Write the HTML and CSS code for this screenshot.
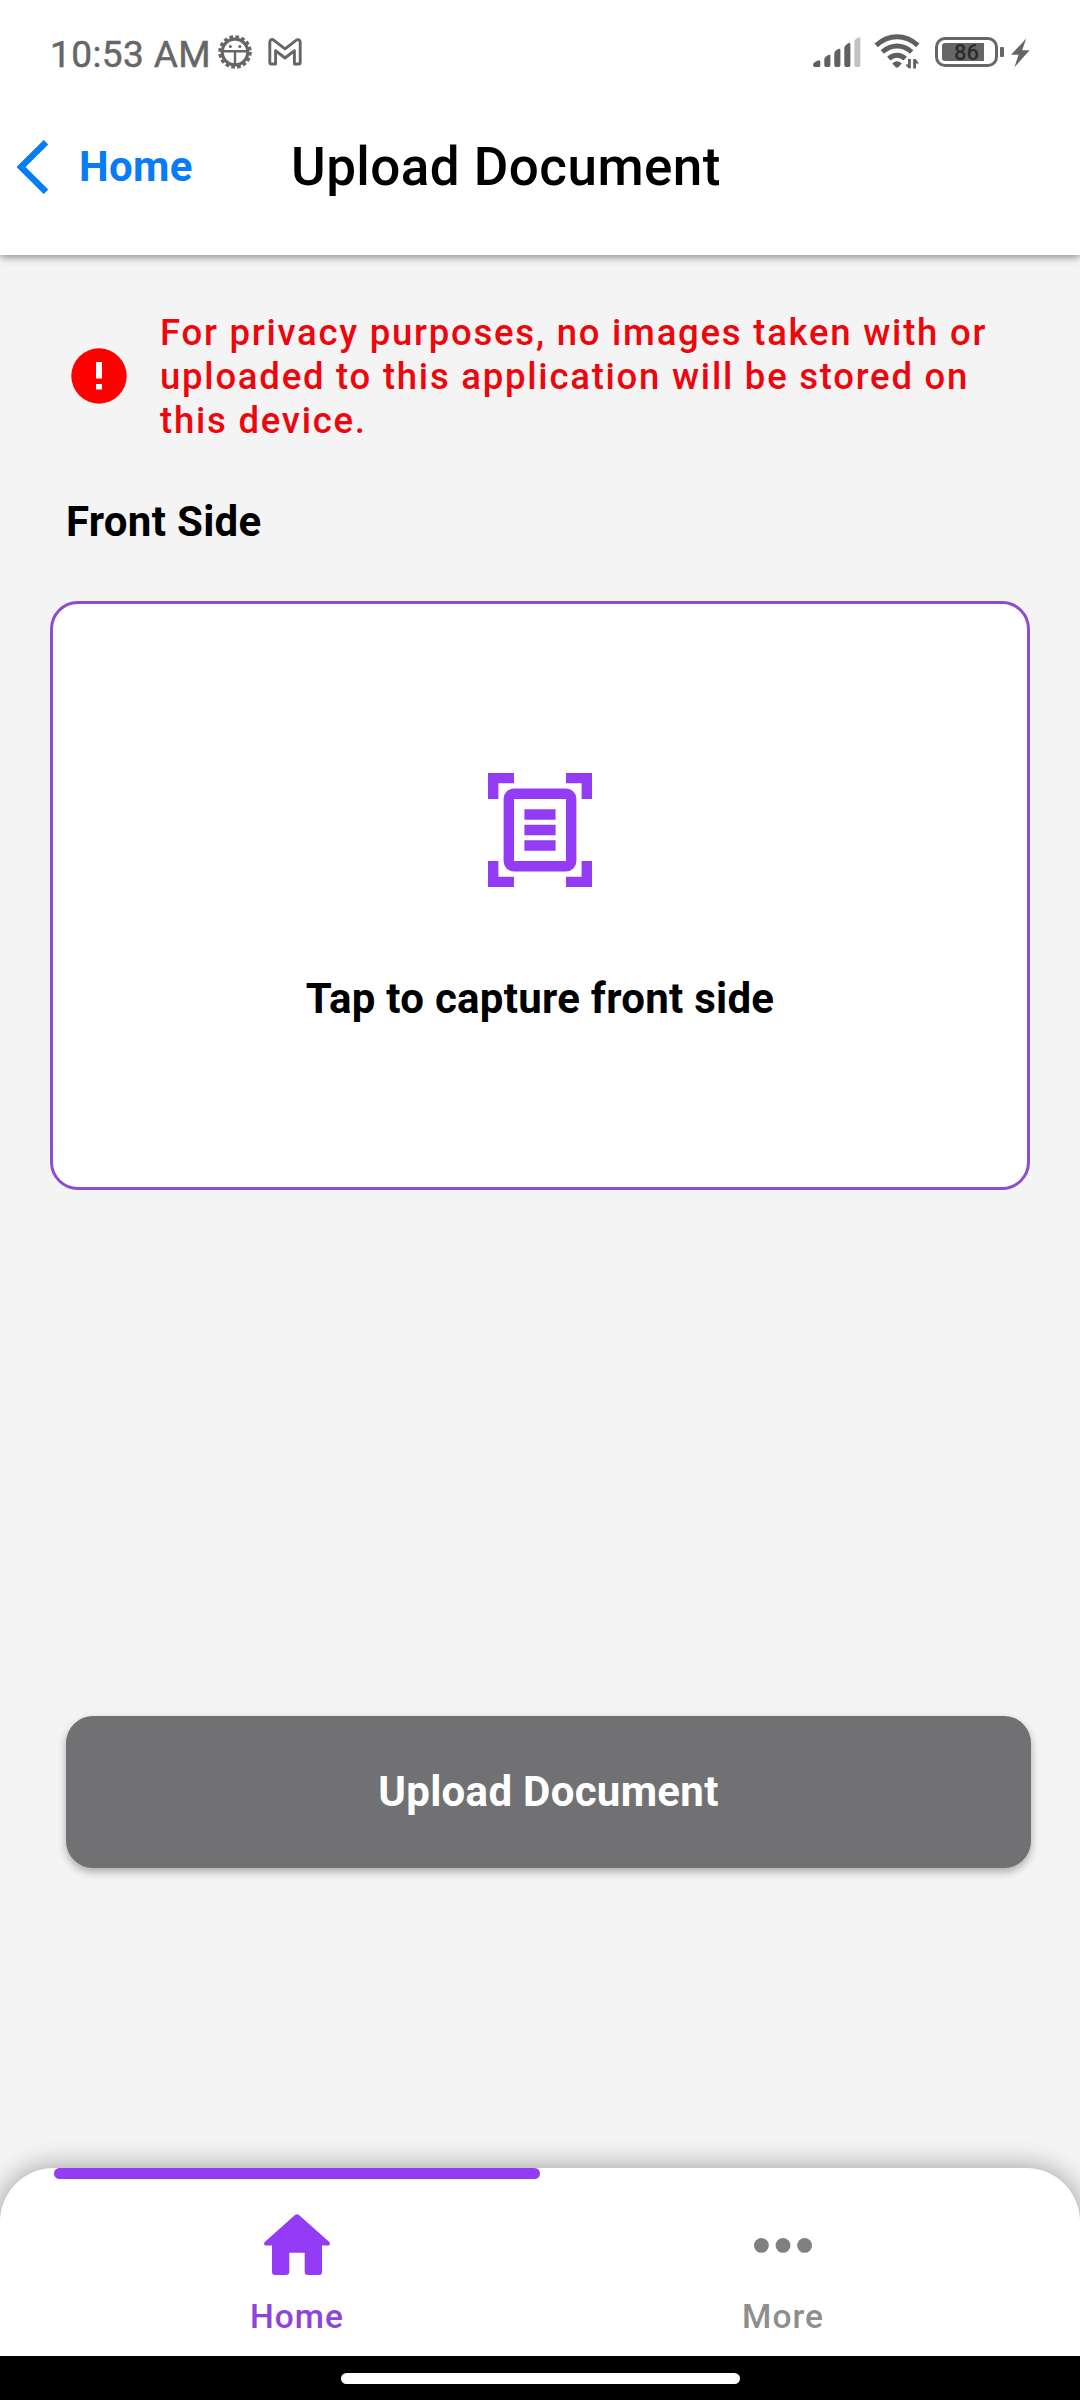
FILE: index.html
```html
<!DOCTYPE html>
<html lang="en">
<head>
<meta charset="utf-8">
<title>Upload Document</title>
<link rel="stylesheet" href="styles.css">
</head>
<body>
<div class="screen">
  <header class="header">
    <div class="status">
      <span class="time">10:53 AM</span>
      <svg class="status-sun" width="36" height="36" viewBox="0 0 36 36">
        <circle cx="18" cy="18" r="15" fill="none" stroke="#666" stroke-width="3.6" stroke-dasharray="3.6 2.29"/>
        <circle cx="18" cy="18" r="12.8" fill="none" stroke="#666" stroke-width="3.2"/>
        <path d="M6 17.2H30M18 17.2V30" fill="none" stroke="#666" stroke-width="2.4"/>
        <circle cx="13.4" cy="12.4" r="1.5" fill="#666"/><circle cx="22.8" cy="12.4" r="1.5" fill="#666"/>
      </svg>
      <svg class="status-mail" width="34" height="28" viewBox="0 0 34 28">
        <path d="M3.2 1.7Q4.7 1.2 6 2.3L17 10.8L28 2.3Q29.3 1.2 30.9 1.8Q32.2 2.5 32.2 4.3V24.4Q32.2 26 30.7 26H26.4V12.6L17 20L7.6 12.6V26H3.3Q1.8 26 1.8 24.4V4.3Q1.8 2.2 3.2 1.7Z" fill="none" stroke="#666" stroke-width="2.9" stroke-linejoin="round"/>
      </svg>
      <span class="spacer"></span>
      <svg class="status-signal" width="48" height="32" viewBox="0 0 48 32">
        <g fill="#606060">
          <path d="M0 28Q0 26 2 25L5 23.6Q7.3 22.6 7.3 25V28.5Q7.3 30 5.8 30H2Q0 30 0 28Z"/>
          <path d="M11.3 22.5Q11.3 20.6 13 19.6L15.4 18Q17.4 17 17.4 19V28.3Q17.4 30 15.7 30H13Q11.3 30 11.3 28.3Z"/>
          <path d="M21.3 16.5Q21.3 14.6 23 13.6L25.2 12Q27.4 11 27.4 13V28.3Q27.4 30 25.7 30H23Q21.3 30 21.3 28.3Z"/>
          <path d="M31.3 11Q31.3 9 33 8L35.2 6.2Q37.4 5 37.4 7.4V28.3Q37.4 30 35.7 30H33Q31.3 30 31.3 28.3Z"/>
        </g>
        <path d="M41.3 5Q41.3 3 43 2L45.2.5Q47.4-.4 47.4 1.8V28.3Q47.4 30 45.7 30H43Q41.3 30 41.3 28.3Z" fill="#c2c2c2"/>
      </svg>
      <svg class="status-wifi" width="48" height="36" viewBox="0 0 48 36">
        <g fill="none" stroke="#606060" stroke-width="5">
          <path d="M2.2 11.4Q11.5 2.8 23 2.8T43.8 11.4"/>
          <path d="M8.3 18Q15 12 23 12T37.7 18"/>
          <path d="M14.8 24.6Q18.5 21.2 23 21.2T31.2 24.6"/>
        </g>
        <path d="M18.2 29.5Q23 25.2 27.8 29.5L24.5 33Q23 34.4 21.5 33Z" fill="#606060"/>
        <path d="M36.8 25V34.3H34.3L31.4 30.5H34V25ZM39.2 34.4V25H41.6L45 29.4H42V34.4Z" fill="#606060"/>
      </svg>
      <div class="battery"><div class="battery-fill"></div><span class="battery-level">86</span></div>
      <span class="battery-tip"></span>
      <svg class="status-bolt" width="19" height="30" viewBox="0 0 19 30">
        <path d="M15.2 .5L0 16.8H7.6L3.4 29.3L18.6 12.2H11.2Z" fill="#666"/>
      </svg>
    </div>
    <div class="app-bar">
      <svg class="back-icon" width="32" height="54" viewBox="0 0 32 54">
        <path d="M29 2.2L4 27L29 51.8" fill="none" stroke="#067df7" stroke-width="6.4"/>
      </svg>
      <span class="back-label">Home</span>
      <h1 class="title">Upload Document</h1>
    </div>
  </header>

  <main class="content">
    <div class="notice">
      <svg class="notice-icon" width="56" height="56" viewBox="0 0 56 56">
        <circle cx="28" cy="28" r="27.7" fill="#f00"/>
        <path d="M25 14H31V30.5H25ZM25 36H31V41.6H25Z" fill="#fff"/>
      </svg>
      <p class="notice-text">For privacy purposes, no images taken with or<br>uploaded to this application will be stored on<br>this device.</p>
    </div>
    <h2 class="section-title">Front Side</h2>
    <div class="capture-card">
      <svg class="scan-icon" width="104" height="114" viewBox="0 0 20 22" preserveAspectRatio="none">
        <g fill="none" stroke="#943cf5" stroke-width="2">
          <path d="M1 5V1H5M15 1H19V5M19 17V21H15M5 21H1V17"/>
          <rect x="4" y="4" width="12" height="14" rx="1"/>
          <path d="M7 8H13M7 11H13M7 14H13"/>
        </g>
      </svg>
      <span class="capture-label">Tap to capture front side</span>
    </div>
    <button class="upload-button">Upload Document</button>
  </main>

  <nav class="tabs">
    <div class="indicator"></div>
    <div class="tab-row">
      <div class="tab tab-active">
        <svg class="tab-icon" width="66" height="61" viewBox="0 0 66 62" preserveAspectRatio="none">
          <path d="M31 1Q33 -.6 35 1L65 28.3Q66.2 29.5 65.8 31Q65.4 32 64 32H58V59Q58 62 55 62H44Q40.7 62 40.7 59V39.3H25.3V59Q25.3 62 22 62H11Q8 62 8 59V32H2Q.6 32 .2 31Q-.2 29.5 1 28.3Z" fill="#943cf5"/>
        </svg>
        <span class="tab-label">Home</span>
      </div>
      <div class="tab">
        <svg class="tab-icon" width="60" height="61" viewBox="0 0 60 61">
          <g fill="#808080"><circle cx="8.4" cy="31.4" r="7.4"/><circle cx="30" cy="31.4" r="7.4"/><circle cx="51.6" cy="31.4" r="7.4"/></g>
        </svg>
        <span class="tab-label">More</span>
      </div>
    </div>
  </nav>
  <div class="gesture-bar"><div class="gesture-pill"></div></div>
</div>
</body>
</html>
```

FILE: styles.css
```css
* { box-sizing: border-box; }

body {
  margin: 0;
  font-family: Roboto, sans-serif;
  color: #000;
  background: #f4f4f4;
}

h1, h2, p { margin: 0; }

.screen {
  width: 1080px;
  height: 2400px;
  display: flex;
  flex-direction: column;
  overflow: hidden;
  background: #f4f4f4;
}

.header {
  height: 255px;
  background: #fff;
  box-shadow: 0 2px 8px rgba(0, 0, 0, .45);
}

.status {
  height: 108px;
  padding: 0 50px;
  display: flex;
  align-items: center;
}

.time {
  width: 167px;
  font-size: 37px;
  letter-spacing: .4px;
  white-space: nowrap;
  color: #666;
  -webkit-text-stroke: .5px #666;
}

.status-sun { margin-top: -4px; }
.status-mail { margin: -5px 0 0 15px; }
.spacer { flex: 1; }
.status-signal { margin-top: -2px; }
.status-wifi { margin: -4px 0 0 13px; }

.battery {
  position: relative;
  width: 63px;
  height: 30px;
  margin: -4px 0 0 13px;
  padding: 3px 4px;
  border: 3px solid #666;
  border-radius: 10px;
}

.battery-fill {
  width: 42px;
  height: 18px;
  border-radius: 3px 0 0 3px;
  background: #666;
}

.battery-level {
  position: absolute;
  left: 16px;
  top: 0;
  font-size: 22px;
  font-weight: 500;
  line-height: 25px;
  color: #2c2c2c;
}

.battery-tip {
  width: 4px;
  height: 10px;
  margin: -4px 7px 0 2px;
  border-radius: 1px;
  background: #666;
}

.status-bolt { margin-top: -3px; }

.app-bar {
  height: 118px;
  padding-left: 17px;
  display: flex;
  align-items: center;
}

.back-label {
  width: 212px;
  margin: -2px 0 0 30px;
  font-size: 42px;
  font-weight: 700;
  letter-spacing: .3px;
  color: #067df7;
}

.title {
  font-size: 53px;
  font-weight: 500;
  letter-spacing: .45px;
  white-space: nowrap;
}

.content {
  flex: 1;
  display: flex;
  flex-direction: column;
  padding: 56px 49px 0 50px;
}

.notice {
  display: flex;
  align-items: center;
  padding-left: 21px;
}

.notice-icon { margin-top: -3px; }

.notice-text {
  margin-left: 33px;
  font-size: 36.5px;
  font-weight: 500;
  line-height: 44px;
  letter-spacing: 1.76px;
  white-space: nowrap;
  color: #ee060c;
}

.section-title {
  margin: 54px 0 0 16px;
  font-size: 42px;
  font-weight: 700;
  line-height: 50px;
  letter-spacing: .3px;
}

.capture-card {
  height: 589px;
  margin: 54px 1px 0 0;
  padding-top: 169px;
  display: flex;
  flex-direction: column;
  align-items: center;
  border: 3px solid #8d4cd2;
  border-radius: 28px;
  background: #fff;
}

.capture-label {
  margin-top: 87px;
  font-size: 42px;
  font-weight: 700;
  line-height: 50px;
  letter-spacing: .27px;
  white-space: nowrap;
}

.upload-button {
  height: 152px;
  margin: 526px 0 0 16px;
  padding: 0 0 2px;
  border: 0;
  border-radius: 27px;
  background: #717173;
  box-shadow: 0 4px 8px rgba(0, 0, 0, .3);
  font-family: inherit;
  font-size: 42px;
  font-weight: 700;
  letter-spacing: .3px;
  color: #fff;
}

.tabs {
  height: 188px;
  border-radius: 54px 54px 0 0;
  background: #fff;
  box-shadow: 0 0 28px rgba(0, 0, 0, .38);
}

.indicator {
  width: 486px;
  height: 11px;
  margin-left: 54px;
  border-radius: 6px;
  background: #943cf5;
}

.tab-row {
  display: flex;
  padding: 35px 54px 0;
}

.tab {
  flex: 1;
  display: flex;
  flex-direction: column;
  align-items: center;
  color: #8e8e8e;
}

.tab-active { color: #8c44dc; }

.tab-label {
  margin-top: 22px;
  font-size: 33.5px;
  font-weight: 500;
  line-height: 40px;
  letter-spacing: 1px;
}

.gesture-bar {
  position: relative;
  height: 44px;
  padding-top: 17px;
  background: #000;
}

.gesture-pill {
  width: 399px;
  height: 11px;
  margin: 0 auto;
  border-radius: 6px;
  background: #fff;
}
```
